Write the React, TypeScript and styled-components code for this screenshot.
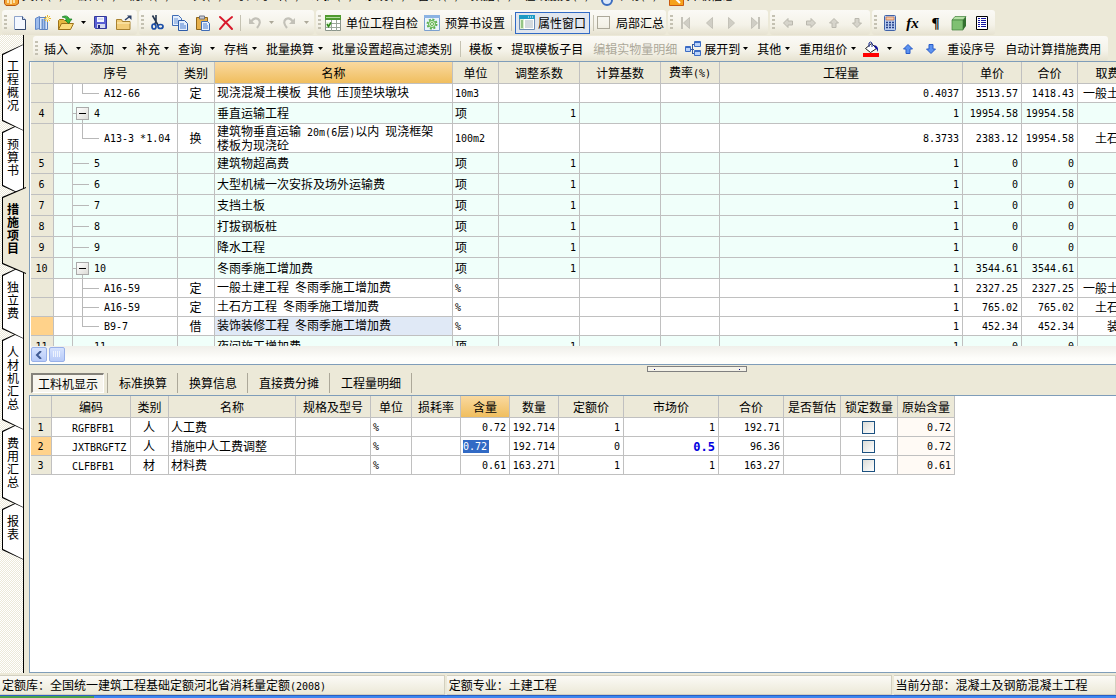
import React from "react";
import styled, { createGlobalStyle, css } from "styled-components";

const GlobalStyle = createGlobalStyle`
  * { box-sizing: border-box; }
  html, body, #root { height: 100%; margin: 0; }
  body {
    overflow: hidden;
    background: #ece9d8;
    color: #000;
    font-family: "Noto Sans CJK SC", sans-serif;
    font-size: 12px;
    line-height: 14px;
  }
  button, input, label { font: inherit; color: inherit; }
  button { border: 0; padding: 0; background: none; white-space: nowrap; }
`;

const Page = styled.div`
  display: flex;
  flex-direction: column;
  height: 100vh;
`;

/* ---------- text ---------- */

const Latin = styled.span`
  font-family: "DejaVu Sans Mono", monospace;
  font-size: 10px;
  white-space: pre;
`;

/** Sets half-width runs in the monospaced face so they take half a Chinese character each. */
function Mixed({ text }: { text: string }) {
  return (
    <>
      {text
        .split(/([\x20-\x7e]+)/)
        .filter(Boolean)
        .map((part, i) => (/^[\x20-\x7e]/.test(part) ? <Latin key={i}>{part}</Latin> : part))}
    </>
  );
}

/* ---------- menu bar ---------- */

const MenuBar = styled.nav`
  display: flex;
  align-items: flex-end;
  gap: 11px;
  flex: none;
  height: 10px;
  padding: 0 0 6px 4px;
  overflow: hidden;
  & > svg { margin: 0 -8px -2px 0; flex: none; }
`;

const MenuItem = styled.button`
  flex: none;
  line-height: 14px;
`;

/* ---------- toolbars ---------- */

const ToolbarRow = styled.div`
  display: flex;
  gap: 2px;
  flex: none;
  padding-left: 2px;
`;

const Toolbar = styled.div`
  display: flex;
  align-items: center;
  flex: none;
  height: 25px;
  padding: 0 2px 0 1px;
  border-radius: 3px;
  background: linear-gradient(#fbfaf6, #f4f2e8 60%, #e6e2d0);
`;

const Grip = styled.span`
  width: 3px;
  height: 16px;
  margin: 0 1px;
  background: repeating-linear-gradient(#c4c1b2 0 2px, transparent 2px 4px);
`;

const IconButton = styled.button<{ $w?: number }>`
  display: flex;
  align-items: center;
  justify-content: center;
  width: ${(p) => p.$w ?? 23}px;
  height: 22px;
`;

const GlyphButton = styled(IconButton)`
  font-family: "Liberation Serif", serif;
  font-size: 15px;
  font-weight: 700;
`;

const LabelButton = styled.button<{ $on?: boolean }>`
  display: flex;
  align-items: center;
  gap: 5px;
  height: 22px;
  padding: 0 3px;
  ${(p) =>
    p.$on &&
    css`
      gap: 3px;
      border: 1px solid #316ac5;
      background: #e1e6ee;
    `}
`;

const TextButton = styled.button<{ $off?: boolean }>`
  display: flex;
  align-items: center;
  height: 22px;
  padding: 0 5px;
  ${(p) => p.$off && css`color: #aca899;`}
`;

const DropButton = styled(TextButton)<{ $gap?: number }>`
  gap: ${(p) => p.$gap ?? 4}px;
  padding-right: 4px;
`;

const IconDrop = styled(DropButton)`
  gap: ${(p) => p.$gap ?? 3}px;
  padding-left: 3px;
`;

const Divider = styled.span`
  width: 1px;
  height: 16px;
  margin: 0 3px;
  background: #c5c2b2;
`;

const CheckLabel = styled.label`
  display: flex;
  align-items: center;
  gap: 6px;
`;

const Check = styled.input.attrs({ type: "checkbox" })<{ $flat?: boolean }>`
  appearance: none;
  display: block;
  width: 13px;
  height: 13px;
  margin: 0 auto;
  border: 1px solid ${(p) => (p.$flat ? "#aca899" : "#1c5180")};
  background: ${(p) => (p.$flat ? "transparent" : "linear-gradient(135deg, #dcdcd7, #fff)")};
`;

/* ---------- work area ---------- */

const Body = styled.div`
  display: flex;
  flex: 1;
  min-height: 0;
`;

const Side = styled.div`
  display: flex;
  flex-direction: column;
  flex: none;
  width: 24px;
  padding-top: 9px;
  border-right: 1px solid #000;
  background: repeating-conic-gradient(#fff 0 25%, #ece9d8 0 50%) 0 0 / 2px 2px;
`;

const SideTab = styled.button<{ $active?: boolean; $z: number }>`
  position: relative;
  z-index: ${(p) => (p.$active ? 20 : p.$z)};
  width: ${(p) => (p.$active ? 26 : 24)}px;
  margin-bottom: -9px;
  padding: 15px 0 20px 7px;
  font-weight: ${(p) => (p.$active ? 700 : 400)};
  line-height: 13px;
  text-align: left;
  &::before,
  &::after {
    content: "";
    position: absolute;
    z-index: -2;
    inset: 0 0 0 2px;
    background: #000;
    clip-path: polygon(0 10px, 100% 0, 100% 100%, 0 calc(100% - 10px));
  }
  &::after {
    z-index: -1;
    inset: 1px ${(p) => (p.$active ? 0 : 1)}px 1px 3px;
    background: ${(p) => (p.$active ? "#ece9d8" : "#fff")};
  }
`;

const SideText = styled.span`
  display: block;
  width: 12px;
  white-space: normal;
  word-break: break-all;
`;

const Work = styled.main`
  display: flex;
  flex-direction: column;
  flex: 1;
  min-width: 0;
  padding-left: 5px;
`;

const WorkToolbar = styled(Toolbar)`
  align-self: flex-start;
  margin: 1px 0 0 4px;
`;

const Panel = styled.section<{ $grow?: boolean }>`
  display: flex;
  flex-direction: column;
  flex: ${(p) => (p.$grow ? "1 1 0" : "0 0 304px")};
  min-height: 0;
  overflow: hidden;
  padding-left: 1px;
  border: 1px solid #7f9db9;
  border-right: 0;
  background: #fff;
`;

const Viewport = styled.div`
  flex: 1;
  min-height: 0;
  overflow: hidden;
`;

const HScroll = styled.div`
  display: flex;
  gap: 2px;
  flex: none;
  height: 18px;
  padding: 1px 0;
  background: linear-gradient(#f0efea, #fefefb 70%);
`;

const ScrollPart = styled.button`
  display: flex;
  align-items: center;
  justify-content: center;
  width: 16px;
  height: 15px;
  border: 1px solid #98b0e8;
  border-radius: 2px;
  background: linear-gradient(#d5e2fe, #b8cbf8);
`;

/* ---------- grids ---------- */

const Grid = styled.table<{ $w: number }>`
  width: ${(p) => p.$w}px;
  table-layout: fixed;
  border-spacing: 0;
`;

const Th = styled.th<{ $hot?: boolean }>`
  height: 22px;
  padding: 0;
  border: solid #c0c0c0;
  border-width: 0 1px 1px 0;
  background: ${(p) => (p.$hot ? "linear-gradient(#f9d9a0, #f0be5e)" : "#ece9d8")};
  font-weight: 400;
  text-align: center;
  white-space: nowrap;
`;

const Tr = styled.tr<{ $h: number; $mint?: boolean }>`
  height: ${(p) => p.$h}px;
  background: ${(p) => (p.$mint ? "#f0fffa" : "#fff")};
`;

const Td = styled.td<{ $a?: "left" | "center" | "right"; $bg?: string }>`
  padding: 0 3px 0 2px;
  border: solid #c0c0c0;
  border-width: 0 1px 1px 0;
  background: ${(p) => p.$bg ?? "transparent"};
  line-height: 12px;
  text-align: ${(p) => p.$a ?? "left"};
  white-space: nowrap;
  overflow: hidden;
`;

const TreeTd = styled(Td)`
  padding: 0;
`;

const TreeLine = styled.div<{ $h: number }>`
  display: flex;
  align-items: center;
  height: ${(p) => p.$h - 1}px;
`;

const TreeText = styled(Latin)`
  padding-top: 2px;
`;

const Stub = styled.span<{ $w: number }>`
  width: ${(p) => p.$w}px;
  height: 1px;
  background: #b8b8b8;
`;

const LeafStub = styled(Stub)`
  margin-right: 5px;
`;

const Expander = styled.button`
  position: relative;
  width: 13px;
  height: 13px;
  margin-right: 5px;
  border: 1px solid #aaa;
  background: linear-gradient(135deg, #fff, #dcdcd7);
  &::before {
    content: "";
    position: absolute;
    top: 5px;
    left: 2px;
    width: 7px;
    height: 1px;
    background: #000;
  }
  &::after {
    content: "";
    position: absolute;
    top: 12px;
    left: 5px;
    width: 1px;
    height: 5px;
    background: #b8b8b8;
  }
`;

const Elbow = styled.span<{ $last?: boolean }>`
  position: relative;
  align-self: stretch;
  width: 17px;
  margin: 0 5px 0 9px;
  &::before {
    content: "";
    position: absolute;
    inset: 0 auto ${(p) => (p.$last ? "50%" : "-1px")} 0;
    width: 1px;
    background: #b8b8b8;
  }
  &::after {
    content: "";
    position: absolute;
    top: 50%;
    width: 100%;
    height: 1px;
    background: #b8b8b8;
  }
`;

const Changed = styled.b`
  color: #0000e0;
  font-family: "DejaVu Sans Mono", monospace;
  font-size: 12px;
`;

const CellInput = styled.input`
  display: block;
  width: 26px;
  height: 13px;
  padding: 0;
  border: 0;
  background: #316ac5;
  color: #fff;
  font-family: "DejaVu Sans Mono", monospace;
  font-size: 10px;
  line-height: 12px;
`;

const NameText = styled.div`
  padding-right: 8px;
  white-space: normal;
`;

/* ---------- lower tabs, status ---------- */

const Splitter = styled.div`
  display: flex;
  justify-content: center;
  flex: none;
  height: 8px;
  padding: 1px 0 0 248px;
`;

const Handle = styled.span`
  display: flex;
  align-items: center;
  justify-content: space-between;
  width: 100px;
  height: 6px;
  padding: 0 6px;
  border: 1px solid #808080;
  background: #f4f2e8;
  &::before,
  &::after {
    content: "";
    width: 1px;
    height: 1px;
    background: #000080;
  }
`;

const Tabs = styled.div`
  display: flex;
  align-items: center;
  flex: none;
  height: 22px;
  padding: 0 0 2px 2px;
`;

const Tab = styled.button<{ $active?: boolean }>`
  height: 20px;
  ${(p) =>
    p.$active
      ? css`
          padding: 0 5px;
          margin-right: 3px;
          border: 1px solid #fff;
          border-top: 2px solid #85827a;
          border-left: 2px solid #85827a;
          background: #f7f5ee;
        `
      : css`
          padding: 0 10px 0 11px;
        `}
`;

const TabDivider = styled.span`
  width: 1px;
  height: 20px;
  background: #aca899;
`;

const StatusBar = styled.footer`
  display: grid;
  grid-template-columns: 4fr 4fr 2fr;
  gap: 2px;
  flex: none;
  height: 22px;
  padding-top: 2px;
`;

const StatusCell = styled.div`
  padding: 0 2px;
  border: 1px solid #d2cfbf;
  border-left-width: 0;
  background: linear-gradient(#fbfaf6, #ece9d8);
  line-height: 18px;
  white-space: nowrap;
  overflow: hidden;
`;

const TaskBar = styled.div`
  display: flex;
  flex: none;
  height: 3px;
  border-top: 1px solid #2a5fc4;
  background: #3c86ee;
  &::before {
    content: "";
    width: 94px;
    background: #4ba046;
  }
`;

/* ---------- icons ---------- */

const Svg = ({ children, w = 16, h = 16 }: { children: React.ReactNode; w?: number; h?: number }) => (
  <svg width={w} height={h} viewBox={`0 0 ${w} ${h}`} aria-hidden="true">
    {children}
  </svg>
);

const Caret = ({ c = "#000" }: { c?: string }) => (
  <Svg w={5} h={3}>
    <path d="M0 0h5L2.500 3z" fill={c} />
  </Svg>
);

const NewIcon = () => (
  <Svg>
    <path d="M2.500 1.500h8l3 3v10h-11z" fill="#f4f8ff" stroke="#8ea3cb" />
    <path d="M10.500 1.500v3h3" fill="#cddcf5" stroke="#41577f" />
    <path d="M13.500 5v9.500H3" fill="none" stroke="#34496f" />
  </Svg>
);
const BookIcon = () => (
  <Svg>
    <path d="M.5 3.500l4-2v12l-4 1z" fill="#9dbcec" stroke="#5f86c8" />
    <path d="M4.500 2.500h8v12h-8z" fill="#dbe8fb" stroke="#5d82c0" />
    <path d="M6 5h5M6 7h5M6 9h5M6 11h5M6 13h5M7.500 4v10M9.500 4v10" stroke="#6c93cf" />
    <path d="M12.500 0v7M9 3.500h7M10 1l5 5M15 1l-5 5" stroke="#e9b72c" />
    <circle cx="12.500" cy="3.500" r="1.500" fill="#fff3b0" />
  </Svg>
);
const OpenIcon = () => (
  <Svg>
    <path d="M.5 14.500v-9l1-1h4l1 1h5v3" fill="#e5b83f" stroke="#9c7118" />
    <path d="M.5 14.500l3-6h12l-3 6z" fill="#fbdc7c" stroke="#9c7118" />
    <path d="M4 2q5-3 7.500 2H14l-3.500 4.500L7 5h2Q7.500 2 4 2z" fill="#35b33a" stroke="#167a1f" strokeWidth=".7" />
  </Svg>
);
const SaveIcon = () => (
  <Svg>
    <path d="M1.500 1.500h12v12h-11l-1-1z" fill="#5a60d4" stroke="#33389a" />
    <path d="M4 2h7v5H4z" fill="#f4f6ff" />
    <path d="M5 4h5" stroke="#b8bfe0" />
    <path d="M4 9h8v4H4z" fill="#d5d9ee" />
    <path d="M5 10h2v3H5z" fill="#23287e" />
  </Svg>
);
const FolderIcon = () => (
  <Svg>
    <path d="M.5 14.500v-10h5l1 2h7.500v8z" fill="#f2cd78" stroke="#a8812f" />
    <path d="M1 8h13" stroke="#fff0bd" />
    <path d="M9 5l4-3" stroke="#2a3f66" strokeWidth="1.500" />
    <path d="M11 .5h4.500V5z" fill="#2a3f66" />
  </Svg>
);
const CutIcon = () => (
  <Svg>
    <path d="M3.500.5l6 10.500M7 0v7l-2 3" stroke="#26364f" strokeWidth="1.600" fill="none" />
    <ellipse cx="5" cy="11.500" rx="2" ry="2.500" fill="none" stroke="#1c4fa8" strokeWidth="1.700" />
    <ellipse cx="11.500" cy="11.500" rx="2.500" ry="2" fill="none" stroke="#1c4fa8" strokeWidth="1.700" />
  </Svg>
);
const CopyIcon = () => (
  <Svg>
    <path d="M.5.500h6l3 3v7h-9z" fill="#e4eefc" stroke="#3f6cb5" />
    <path d="M2 4h4M2 6h4M2 8h4" stroke="#6c96d6" />
    <path d="M6.500 5.500h6l3 3v7h-9z" fill="#e4eefc" stroke="#2c5ba8" />
    <path d="M8 9h4M8 11h6M8 13h6" stroke="#4b7fd0" />
  </Svg>
);
const PasteIcon = () => (
  <Svg>
    <path d="M1.500 2.500h11v12h-11z" fill="#e7b04a" stroke="#8f651a" />
    <path d="M4.500 1h5v3h-5z" fill="#c9cdd6" stroke="#6e7380" />
    <path d="M6.500 6.500h6l2 2v7h-8z" fill="#eaf2fd" stroke="#3f6cb5" />
    <path d="M8 9h4M8 11h5M8 13h5" stroke="#4b7fd0" />
  </Svg>
);
const DeleteIcon = () => (
  <Svg>
    <path d="M2 2q6 5 12 12M14 2Q7 7 2 14" stroke="#d8192b" strokeWidth="2" fill="none" strokeLinecap="round" />
  </Svg>
);
const UndoIcon = ({ flip }: { flip?: boolean }) => (
  <Svg>
    <g transform={flip ? "translate(16 0) scale(-1 1)" : undefined} fill="none" stroke="#c3c1b8">
      <path d="M4 7q3-5 7-3 4 3-1 9" strokeWidth="2.200" />
      <path d="M2 3v6h6z" fill="#c3c1b8" stroke="none" />
    </g>
  </Svg>
);
const SheetIcon = () => (
  <Svg>
    <path d="M.5.500h15v15H.5z" fill="#fff" stroke="#8b958b" />
    <path d="M0 0h16v5H0z" fill="#4f9a2f" />
    <path d="M1 2.500h14" stroke="#b5dda0" />
    <path d="M6.500 5v11M11.500 5v11M1 8.500h14M1 12.500h14" stroke="#9aa59a" />
    <path d="M1 7h5v5H1z" fill="#e9f6e0" />
    <path d="M2 9l1.500 2.500L6 7.500" stroke="#2f8a1a" strokeWidth="1.600" fill="none" />
  </Svg>
);
const GearIcon = () => (
  <Svg>
    <path d="M.5.500h15v15H.5z" fill="#eaf4fc" stroke="#7ba0cf" />
    <path d="M0 0h16v3H0z" fill="#8bb3e3" />
    <circle cx="8" cy="9" r="4.500" fill="none" stroke="#5bb04b" strokeWidth="2" strokeDasharray="2 1.500" />
    <circle cx="8" cy="9" r="3.500" fill="#d9f0cf" stroke="#5bb04b" />
    <circle cx="8" cy="9" r="1.500" fill="#fff" stroke="#5bb04b" />
  </Svg>
);
const PropIcon = () => (
  <Svg>
    <path d="M.5.500h15v14H.5z" fill="#fff" stroke="#6b8cb5" />
    <path d="M0 0h16v4H0z" fill="#1d9bc4" />
    <path d="M9 2h1M11 2h1M13 2h1" stroke="#fff" />
    <path d="M1 4h4v10H1z" fill="#dcefd0" />
    <path d="M2 6h2M2 8h2M2 10h2M2 12h2" stroke="#4d9a3a" />
    <path d="M6 6h8M6 8h8M6 10h8M6 12h8" stroke="#a8b4bd" />
  </Svg>
);
const NavIcon = ({ end, flip }: { end?: boolean; flip?: boolean }) => (
  <Svg>
    <g transform={flip ? "translate(16 0) scale(-1 1)" : undefined} fill="#d0cec5" stroke="#c4c2b8">
      <path d="M11.500 2.500v11L5.500 8z" />
      {end && <path d="M3 2h2v12H3z" stroke="none" fill="#c4c2b8" />}
    </g>
  </Svg>
);
const ArrowIcon = ({ rot = 0, blue }: { rot?: number; blue?: boolean }) => (
  <Svg>
    <path
      transform={`rotate(${rot} 8 8)`}
      d="M3.500 8L8 3.500V6h4.500v4H8v2.500z"
      fill={blue ? "#5b92f0" : "#d6d4cb"}
      stroke={blue ? "#2a5cc8" : "#bab8ae"}
    />
  </Svg>
);
const CalcIcon = () => (
  <Svg>
    <rect x="2.500" y=".5" width="11" height="15" rx="1" fill="#b9cdf0" stroke="#3f62a8" />
    <path d="M4 2h8v3H4z" fill="#f6c9a8" stroke="#c0602c" strokeWidth=".6" />
    <path d="M4 7.500h8M4 10h8M4 12.500h8" stroke="#24408c" strokeWidth="1.500" strokeDasharray="2 1" />
  </Svg>
);
const CubeIcon = () => (
  <Svg>
    <path d="M1 5l3-3.500h11L12 5z" fill="#b5e0a5" stroke="#3f7f3a" strokeWidth=".7" />
    <path d="M1 5h11v10H1z" fill="#7fc072" stroke="#3f7f3a" strokeWidth=".7" />
    <path d="M12 5l3-3.500V11l-3 4z" fill="#33702f" />
  </Svg>
);
const ListIcon = () => (
  <Svg>
    <path d="M2.500 1.500h11v13h-11z" fill="#fff" stroke="#000" />
    <path d="M4 3.500h2M7 3.500h5M4 5.500h2M7 5.500h5M4 7.500h2M7 7.500h5M4 9.500h2M7 9.500h5M4 11.500h2M7 11.500h5" stroke="#1414a0" />
  </Svg>
);
const TreeIcon = () => (
  <Svg>
    <path d="M5 8.500h4M7.500 3v10M7.500 3.500h2M7.500 12.500h2" stroke="#35589c" fill="none" />
    <path d="M.5 5.500h5v5h-5zM9.500.500h6v5h-6zM9.500 9.500h6v5h-6z" fill="#b9d2fa" stroke="#3c6cc4" />
    <path d="M.5 6.500h5M9.500 1.500h6M9.500 10.500h6" stroke="#3c6cc4" />
  </Svg>
);
const BucketIcon = () => (
  <Svg>
    <path d="M2.500 7.500l6-5 5 5-6 4z" fill="#fff" stroke="#222" />
    <path d="M6 6V2q1.500-2 3 0v4" stroke="#1c2f8f" fill="none" />
    <path d="M11 4q5 1 4 7-1-3-3-4z" fill="#10109a" />
    <path d="M0 12h16v4H0z" fill="#f00" />
  </Svg>
);

/* ---------- data ---------- */

type Node = "open" | "leaf" | "child" | "last";
type Row = {
  no?: string; node: Node; code: string; kind?: string; name: string; unit: string;
  adj?: string; qty: string; price: string; total: string; fee?: string; h: number; current?: boolean;
};

const top = (no: string, name: string, node: Node = "leaf", price = "0"): Row => ({
  no, node, code: no, name, unit: "项", adj: "1", qty: "1", price, total: price, h: 21,
});

const rows: Row[] = [
  { node: "last", code: "A12-66", kind: "定", name: "现浇混凝土模板 其他 压顶垫块墩块", unit: "10m3", qty: "0.4037", price: "3513.57", total: "1418.43", fee: "一般土建工程", h: 19 },
  top("4", "垂直运输工程", "open", "19954.58"),
  { node: "last", code: "A13-3 *1.04", kind: "换", name: "建筑物垂直运输 20m(6层)以内 现浇框架楼板为现浇砼", unit: "100m2", qty: "8.3733", price: "2383.12", total: "19954.58", fee: "土石工程", h: 29 },
  top("5", "建筑物超高费"),
  top("6", "大型机械一次安拆及场外运输费"),
  top("7", "支挡土板"),
  top("8", "打拔钢板桩"),
  top("9", "降水工程"),
  top("10", "冬雨季施工增加费", "open", "3544.61"),
  { node: "child", code: "A16-59", kind: "定", name: "一般土建工程 冬雨季施工增加费", unit: "%", qty: "1", price: "2327.25", total: "2327.25", fee: "一般土建工程", h: 19 },
  { node: "child", code: "A16-59", kind: "定", name: "土石方工程 冬雨季施工增加费", unit: "%", qty: "1", price: "765.02", total: "765.02", fee: "土石工程", h: 19 },
  { node: "last", code: "B9-7", kind: "借", name: "装饰装修工程 冬雨季施工增加费", unit: "%", qty: "1", price: "452.34", total: "452.34", fee: "装饰", h: 19, current: true },
  top("11", "夜间施工增加费"),
];

const upperCols = [23, 19, 105, 37, 238, 46, 81, 81, 59, 243, 59, 56, 84];
const lowerCols = [21, 79, 38, 127, 75, 41, 49, 49, 49, 65, 95, 65, 57, 57, 57];
const lowerHeads = ["", "编码", "类别", "名称", "规格及型号", "单位", "损耗率", "含量", "数量", "定额价", "市场价", "合价", "是否暂估", "锁定数量", "原始含量"];
const resources = [
  { code: "RGFBFB1", kind: "人", name: "人工费", use: "0.72", qty: "192.714", base: "1", market: "1", total: "192.71" },
  { code: "JXTBRGFTZ", kind: "人", name: "措施中人工费调整", use: "0.72", qty: "192.714", base: "0", market: "0.5", total: "96.36", current: true },
  { code: "CLFBFB1", kind: "材", name: "材料费", use: "0.61", qty: "163.271", base: "1", market: "1", total: "163.27" },
];
const sum = (ws: number[]) => ws.reduce((a, b) => a + b, 0);
const Cols = ({ ws }: { ws: number[] }) => (
  <colgroup>{ws.map((w, i) => <col key={i} style={{ width: w }} />)}</colgroup>
);

const menus = ["文件(F)", "编辑(E)", "视图(V)", "工具(T)", "导入导出(D)", "维护(D)", "系统(S)", "窗口(W)", "数据(P)", "在线服务(L)"];
const sideTabs = ["工程概况", "预算书", "措施项目", "独立费", "人材机汇总", "费用汇总", "报表"];

/* ---------- parts ---------- */

function MainToolbars() {
  return (
    <ToolbarRow>
      <Toolbar>
        <Grip />
        <IconButton aria-label="新建"><NewIcon /></IconButton>
        <IconButton aria-label="新建工程"><BookIcon /></IconButton>
        <IconButton aria-label="打开"><OpenIcon /></IconButton>
        <IconButton $w={12} aria-label="最近文件"><Caret /></IconButton>
        <IconButton aria-label="保存"><SaveIcon /></IconButton>
        <IconButton aria-label="关闭"><FolderIcon /></IconButton>
      </Toolbar>
      <Toolbar>
        <Grip />
        <IconButton aria-label="剪切"><CutIcon /></IconButton>
        <IconButton aria-label="复制"><CopyIcon /></IconButton>
        <IconButton aria-label="粘贴"><PasteIcon /></IconButton>
        <IconButton aria-label="删除"><DeleteIcon /></IconButton>
        <Divider />
        <IconButton $w={21} aria-label="撤销"><UndoIcon /></IconButton>
        <IconButton $w={12} aria-label="撤销列表"><Caret c="#aca899" /></IconButton>
        <IconButton aria-label="重做"><UndoIcon flip /></IconButton>
        <IconButton $w={12} aria-label="重做列表"><Caret c="#aca899" /></IconButton>
      </Toolbar>
      <Toolbar>
        <Grip />
        <LabelButton><SheetIcon />单位工程自检</LabelButton>
        <LabelButton><GearIcon />预算书设置</LabelButton>
        <Divider />
        <LabelButton $on><PropIcon />属性窗口</LabelButton>
        <Divider />
        <CheckLabel><Check $flat />局部汇总</CheckLabel>
      </Toolbar>
      <Toolbar>
        <Grip />
        <IconButton aria-label="首行"><NavIcon end /></IconButton>
        <IconButton aria-label="上一行"><NavIcon /></IconButton>
        <IconButton aria-label="下一行"><NavIcon flip /></IconButton>
        <IconButton aria-label="末行"><NavIcon end flip /></IconButton>
      </Toolbar>
      <Toolbar>
        <Grip />
        <IconButton aria-label="左移"><ArrowIcon /></IconButton>
        <IconButton aria-label="右移"><ArrowIcon rot={180} /></IconButton>
        <IconButton aria-label="上移"><ArrowIcon rot={90} /></IconButton>
        <IconButton aria-label="下移"><ArrowIcon rot={270} /></IconButton>
      </Toolbar>
      <Toolbar>
        <Grip />
        <IconButton aria-label="计算器"><CalcIcon /></IconButton>
        <GlyphButton><i>fx</i></GlyphButton>
        <GlyphButton>¶</GlyphButton>
        <IconButton aria-label="图元"><CubeIcon /></IconButton>
        <IconButton aria-label="列表"><ListIcon /></IconButton>
      </Toolbar>
    </ToolbarRow>
  );
}

function EditToolbar() {
  return (
    <WorkToolbar>
      <Grip />
      <DropButton $gap={8}>插入<Caret /></DropButton>
      <DropButton $gap={8}>添加<Caret /></DropButton>
      <DropButton>补充<Caret /></DropButton>
      <DropButton $gap={8}>查询<Caret /></DropButton>
      <DropButton>存档<Caret /></DropButton>
      <DropButton>批量换算<Caret /></DropButton>
      <TextButton>批量设置超高过滤类别</TextButton>
      <Divider />
      <DropButton>模板<Caret /></DropButton>
      <TextButton>提取模板子目</TextButton>
      <TextButton $off>编辑实物量明细</TextButton>
      <IconDrop><TreeIcon />展开到<Caret /></IconDrop>
      <DropButton>其他<Caret /></DropButton>
      <DropButton>重用组价<Caret /></DropButton>
      <IconDrop $gap={8} aria-label="颜色"><BucketIcon /><Caret /></IconDrop>
      <IconButton aria-label="向上"><ArrowIcon rot={90} blue /></IconButton>
      <IconButton aria-label="向下"><ArrowIcon rot={270} blue /></IconButton>
      <TextButton>重设序号</TextButton>
      <TextButton>自动计算措施费用</TextButton>
    </WorkToolbar>
  );
}

function TreeCell({ row }: { row: Row }) {
  return (
    <TreeTd>
      <TreeLine $h={row.h}>
        {row.node === "open" && <><Stub $w={3} /><Expander aria-label="折叠" /></>}
        {row.node === "leaf" && <LeafStub $w={16} />}
        {(row.node === "child" || row.node === "last") && <Elbow $last={row.node === "last"} />}
        <TreeText>{row.code}</TreeText>
      </TreeLine>
    </TreeTd>
  );
}

function MeasureGrid() {
  return (
    <Grid $w={sum(upperCols)}>
      <Cols ws={upperCols} />
      <thead>
        <tr>
          <Th />
          <Th colSpan={2}>序号</Th>
          <Th>类别</Th>
          <Th $hot>名称</Th>
          <Th>单位</Th>
          <Th>调整系数</Th>
          <Th>计算基数</Th>
          <Th><Mixed text="费率(%)" /></Th>
          <Th>工程量</Th>
          <Th>单价</Th>
          <Th>合价</Th>
          <Th>取费专业</Th>
        </tr>
      </thead>
      <tbody>
        {rows.map((r, i) => (
          <Tr key={i} $h={r.h} $mint={!!r.no}>
            <Td $a="center" $bg={r.current ? "#ffd28a" : "#ece9d8"}><Latin>{r.no ?? ""}</Latin></Td>
            <Td />
            <TreeCell row={r} />
            <Td $a="center">{r.kind}</Td>
            <Td $bg={r.current ? "#e0e9f6" : undefined}><NameText><Mixed text={r.name} /></NameText></Td>
            <Td><Mixed text={r.unit} /></Td>
            <Td $a="right"><Latin>{r.adj ?? ""}</Latin></Td>
            <Td />
            <Td />
            <Td $a="right"><Latin>{r.qty}</Latin></Td>
            <Td $a="right"><Latin>{r.price}</Latin></Td>
            <Td $a="right"><Latin>{r.total}</Latin></Td>
            <Td $a="center">{r.fee}</Td>
          </Tr>
        ))}
      </tbody>
    </Grid>
  );
}

const CodeTd = styled(Td)`
  padding: 1px 0 0 20px;
`;

function ResourceGrid() {
  return (
    <Grid $w={sum(lowerCols)}>
      <Cols ws={lowerCols} />
      <thead>
        <tr>{lowerHeads.map((h) => <Th key={h} $hot={h === "含量"}>{h}</Th>)}</tr>
      </thead>
      <tbody>
        {resources.map((r, i) => (
          <Tr key={r.code} $h={19}>
            <Td $a="center" $bg={r.current ? "#ffd28a" : "#ece9d8"}><Latin>{i + 1}</Latin></Td>
            <CodeTd><Latin>{r.code}</Latin></CodeTd>
            <Td $a="center">{r.kind}</Td>
            <Td>{r.name}</Td>
            <Td />
            <Td><Latin>%</Latin></Td>
            <Td />
            <Td $a="right">{r.current ? <CellInput aria-label="含量" defaultValue={r.use} /> : <Latin>{r.use}</Latin>}</Td>
            <Td $a="right"><Latin>{r.qty}</Latin></Td>
            <Td $a="right"><Latin>{r.base}</Latin></Td>
            <Td $a="right">{r.current ? <Changed>{r.market}</Changed> : <Latin>{r.market}</Latin>}</Td>
            <Td $a="right"><Latin>{r.total}</Latin></Td>
            <Td />
            <Td><Check aria-label={`锁定数量 ${i + 1}`} /></Td>
            <Td $a="right" $bg="#fffaf5"><Latin>{r.use}</Latin></Td>
          </Tr>
        ))}
      </tbody>
    </Grid>
  );
}

export default function App() {
  return (
    <Page>
      <GlobalStyle />
      <MenuBar>
        <Svg w={15} h={14}>
          <path d="M.5.500h14v11l-3 2H2l-1.500-2z" fill="#f3a333" stroke="#b8560d" />
          <path d="M4 5v6M7 5v7M10 5v6" stroke="#fff3c9" strokeWidth="1.500" />
        </Svg>
        {menus.map((m) => <MenuItem key={m}><Mixed text={m} /></MenuItem>)}
        <Svg w={12} h={14}>
          <circle cx="6" cy="8" r="5" fill="#dce9fb" stroke="#3b6dc0" strokeWidth="2" />
        </Svg>
        <MenuItem><Mixed text="帮助(H)" /></MenuItem>
        <Svg w={15} h={14}>
          <path d="M.5.500h14v13H.5z" fill="#f6a21c" stroke="#c95a10" />
          <path d="M4 4l7 7" stroke="#fff" strokeWidth="2" />
        </Svg>
        <MenuItem><Mixed text="升级信息 " /></MenuItem>
      </MenuBar>
      <MainToolbars />
      <Body>
        <Side>
          {sideTabs.map((t, i) => (
            <SideTab key={t} $z={10 - i} $active={t === "措施项目"}>
              <SideText>{t}</SideText>
            </SideTab>
          ))}
        </Side>
        <Work>
          <EditToolbar />
          <Panel>
            <Viewport><MeasureGrid /></Viewport>
            <HScroll>
              <ScrollPart aria-label="向左滚动">
                <Svg w={8} h={8}><path d="M6 0L2 4l4 4" fill="none" stroke="#3f5a92" strokeWidth="2" /></Svg>
              </ScrollPart>
              <ScrollPart aria-label="滚动块">
                <Svg w={8} h={7}><path d="M.5 0v6M2.500 0v6M4.500 0v6M6.500 0v6" stroke="#eef4fe" /></Svg>
              </ScrollPart>
            </HScroll>
          </Panel>
          <Splitter><Handle /></Splitter>
          <Tabs>
            <Tab $active>工料机显示</Tab>
            {["标准换算", "换算信息", "直接费分摊", "工程量明细"].map((t) => (
              <React.Fragment key={t}><TabDivider /><Tab>{t}</Tab></React.Fragment>
            ))}
            <TabDivider />
          </Tabs>
          <Panel $grow>
            <Viewport><ResourceGrid /></Viewport>
          </Panel>
        </Work>
      </Body>
      <StatusBar>
        <StatusCell><Mixed text="定额库：全国统一建筑工程基础定额河北省消耗量定额(2008)" /></StatusCell>
        <StatusCell>定额专业：土建工程</StatusCell>
        <StatusCell>当前分部：混凝土及钢筋混凝土工程</StatusCell>
      </StatusBar>
      <TaskBar />
    </Page>
  );
}
